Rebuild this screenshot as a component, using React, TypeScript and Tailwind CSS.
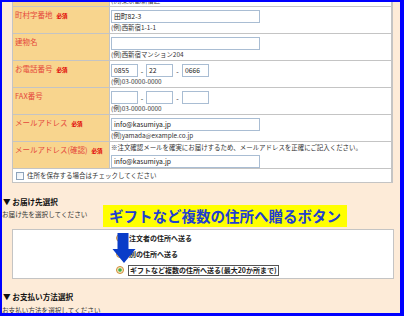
import React from "react";

const Req = () => (
  <span className="ml-[4px] text-[5.5px] font-bold text-[#e00000] align-middle">必須</span>
);

const Row = ({
  label,
  req,
  children,
}: {
  label: string;
  req?: boolean;
  children: React.ReactNode;
}) => (
  <div className="flex h-[27px] border-b border-[#c4c4c4]">
    <div className="w-[97px] shrink-0 bg-[#f8d58e] border-r border-[#c4c4c4] pl-[2px] pt-[3px] leading-[10px] text-[7.5px] text-[#e5483b] whitespace-nowrap">
      {label}
      {req && <Req />}
    </div>
    <div className="flex-1 pl-[1px] pt-[3px] flex flex-col items-start">{children}</div>
  </div>
);

const Input = ({ value = "", w = "w-[149px]" }: { value?: string; w?: string }) => (
  <div
    className={`${w} h-[13px] border border-[#a9bdd3] bg-white pl-[2px] text-[6.8px] leading-[11px] text-[#222] whitespace-nowrap overflow-hidden`}
  >
    {value}
  </div>
);

const Ex = ({ children }: { children: React.ReactNode }) => (
  <div className="text-[6.4px] leading-[9px] text-[#333] whitespace-nowrap">{children}</div>
);

const Phone = ({ a = "", b = "", c = "" }: { a?: string; b?: string; c?: string }) => (
  <div className="flex items-center">
    <Input value={a} w="w-[27px]" />
    <span className="w-[8px] text-center text-[7px] leading-[12px]">-</span>
    <Input value={b} w="w-[27px]" />
    <span className="w-[9px] text-center text-[7px] leading-[12px]">-</span>
    <Input value={c} w="w-[27px]" />
  </div>
);

const Radio = () => (
  <svg width="8" height="8" viewBox="0 0 8 8" className="shrink-0">
    <circle cx="4" cy="4" r="3.5" fill="#f3e6c4" stroke="#d08a30" strokeWidth="1" />
    <circle cx="4" cy="4" r="1.8" fill="#3cb043" />
  </svg>
);

export default function App() {
  return (
    <div className="relative w-[404px] h-[316px] overflow-hidden border-solid border-[#0000ff] border-t-2 border-l-2 border-r-4 border-b-[3px] bg-[#fdebd8] font-['Noto_Sans_CJK_JP',sans-serif] text-[#222]">
      {/* form table */}
      <div className="ml-[10px] w-[381px] border-l border-r-2 border-[#c4c4c4] border-b bg-white">
        <div className="flex h-[5px] border-b border-[#c4c4c4] overflow-hidden">
          <div className="w-[97px] shrink-0 bg-[#f8d58e] border-r border-[#c4c4c4]" />
          <div className="flex-1 pl-[1px] overflow-hidden">
            <div className="-mt-[6px] text-[6.4px] leading-[9px] text-[#333]">(例)東京都新宿区</div>
          </div>
        </div>
        <Row label="町村字番地" req>
          <Input value="田町82-3" />
          <Ex>(例)西新宿1-1-1</Ex>
        </Row>
        <Row label="建物名">
          <Input />
          <Ex>(例)西新宿マンション204</Ex>
        </Row>
        <Row label="お電話番号" req>
          <Phone a="0855" b="22" c="0666" />
          <Ex>(例)03-0000-0000</Ex>
        </Row>
        <Row label="FAX番号">
          <Phone />
          <Ex>(例)03-0000-0000</Ex>
        </Row>
        <Row label="メールアドレス" req>
          <Input value="info@kasumiya.jp" />
          <Ex>(例)yamada@example.co.jp</Ex>
        </Row>
        <div className="flex h-[27px] border-b border-[#c4c4c4]">
          <div className="w-[97px] shrink-0 bg-[#f8d58e] border-r border-[#c4c4c4] pl-[2px] pt-[3px] leading-[10px] text-[7.5px] text-[#e5483b] whitespace-nowrap">
            メールアドレス(確認)
            <Req />
          </div>
          <div className="flex-1 pl-[1px] pt-[1px] flex flex-col items-start">
            <div className="text-[6.45px] leading-[9px] text-[#333] whitespace-nowrap">
              ※注文確認メールを確実にお届けするため、メールアドレスを正確にご記入ください。
            </div>
            <div className="mt-[3px]">
              <Input value="info@kasumiya.jp" />
            </div>
          </div>
        </div>
        <div className="flex items-center h-[13px] pl-[3px] gap-[3px]">
          <div className="w-[8px] h-[8px] border border-[#8ea3bb] bg-gradient-to-br from-[#e8eef5] to-white" />
          <span className="text-[6.5px] leading-[9px] text-[#333]">住所を保存する場合はチェックしてください</span>
        </div>
      </div>

      {/* delivery section */}
      <div className="mt-[14px] pl-[1px] text-[7.6px] leading-[10px] font-bold text-[#111]">▼ お届け先選択</div>
      <div className="mt-[3px] text-[6.6px] leading-[9px] text-[#333]">お届け先を選択してください</div>
      <div className="mt-[10px] ml-[10px] w-[382px] h-[50px] border border-[#c4c4c4] bg-white pl-[103px] flex flex-col">
        <div className="flex items-center h-[16px] gap-[5px]">
          <Radio />
          <span className="text-[7px] font-bold text-[#222] leading-[10px]">注文者の住所へ送る</span>
        </div>
        <div className="flex items-center h-[16px] gap-[5px]">
          <Radio />
          <span className="text-[7px] font-bold text-[#222] leading-[10px]">別の住所へ送る</span>
        </div>
        <div className="flex items-center h-[16px] gap-[4px]">
          <Radio />
          <span className="border border-[#555] px-[1px] text-[7px] font-bold text-[#222] leading-[9px] whitespace-nowrap">
            ギフトなど複数の住所へ送る(最大20か所まで)
          </span>
        </div>
      </div>

      {/* payment section */}
      <div className="mt-[13px] pl-[1px] text-[7.6px] leading-[10px] font-bold text-[#111]">▼ お支払い方法選択</div>
      <div className="mt-[4px] text-[6.6px] leading-[9px] text-[#333]">お支払い方法を選択してください</div>

      {/* annotation overlay */}
      <div className="absolute left-[101px] top-[203px] w-[244px] h-[22px] bg-[#ffff00] flex items-center justify-center text-[14.5px] font-bold text-[#1f40d0] whitespace-nowrap">
        ギフトなど複数の住所へ贈るボタン
      </div>
      <svg className="absolute left-[108px] top-[230px]" width="28" height="34" viewBox="0 0 28 34">
        <polygon points="7.5,1 18.5,1 18.5,17 25.5,17 14,31 2.5,17 7.5,17" fill="#0a3cc8" />
      </svg>
    </div>
  );
}
